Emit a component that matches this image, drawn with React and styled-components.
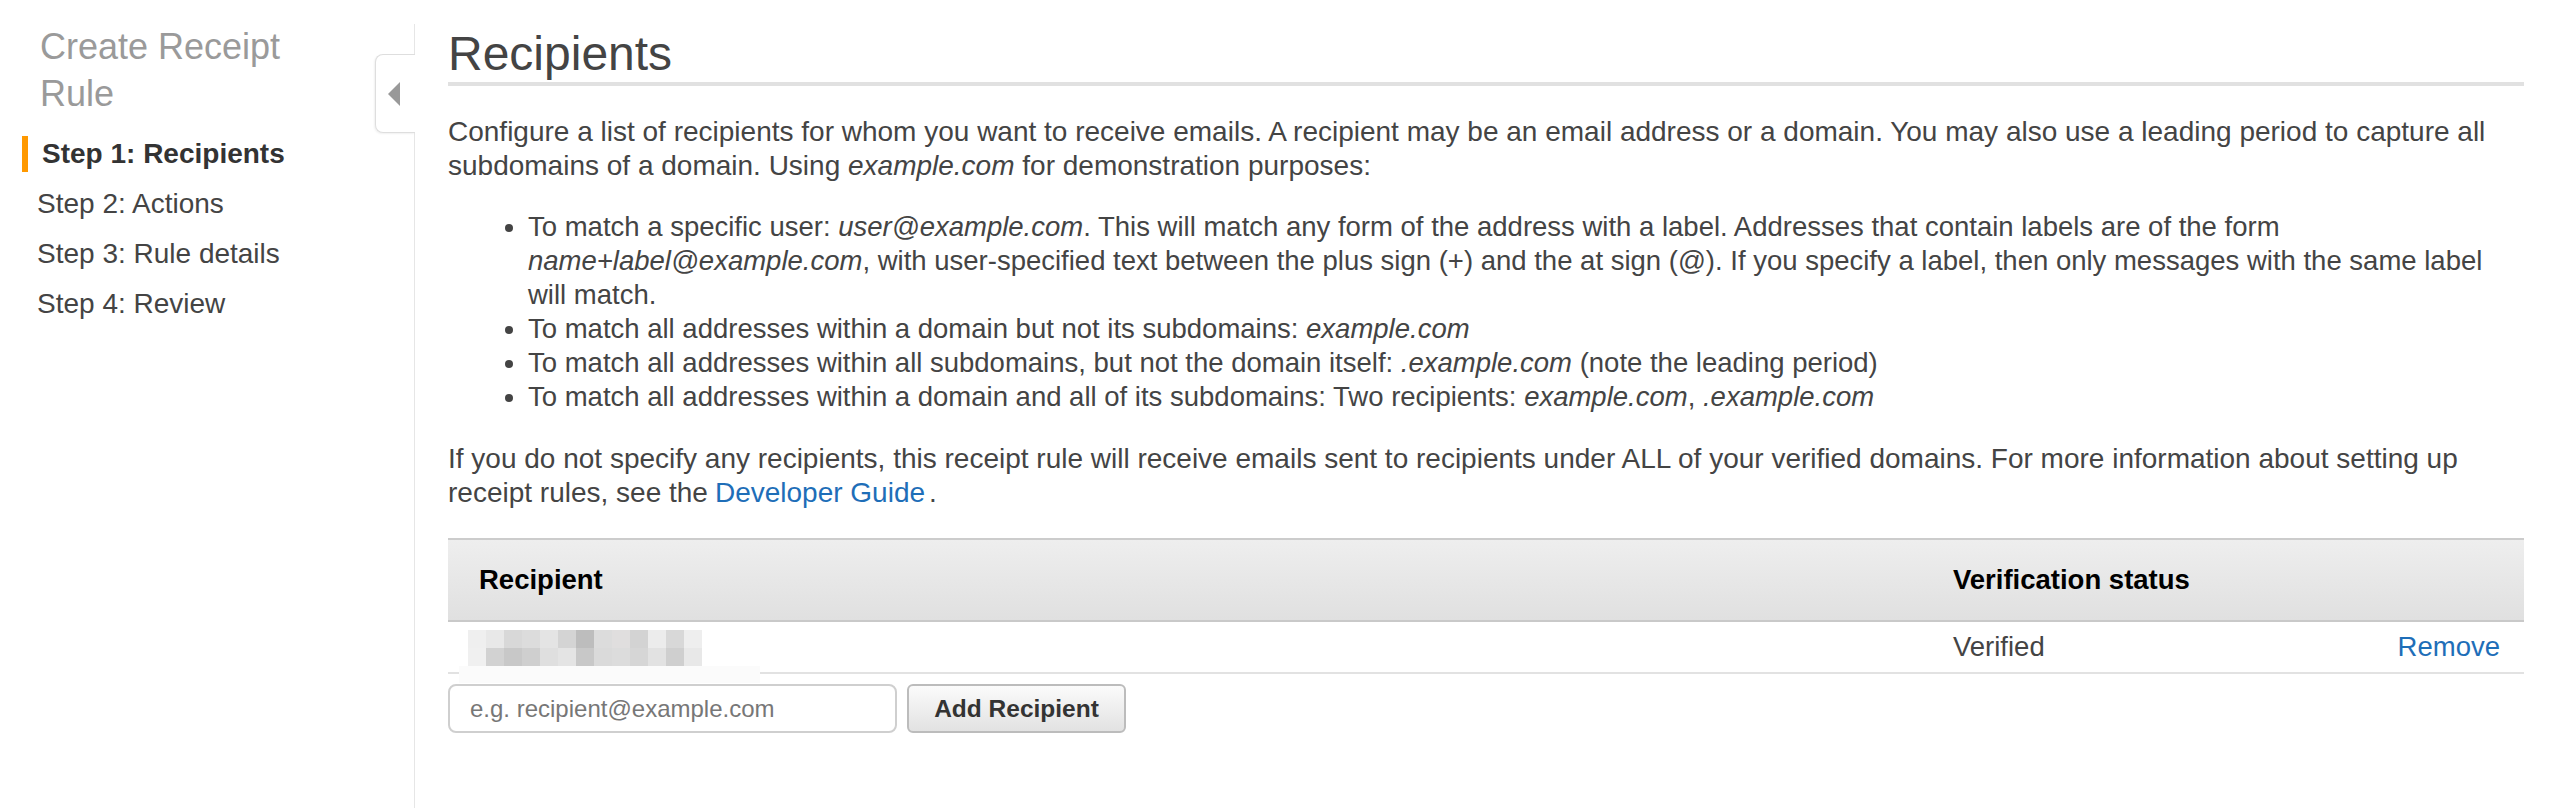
import React from "react";
import styled, { createGlobalStyle } from "styled-components";

const GlobalStyle = createGlobalStyle`
  html, body {
    margin: 0;
    padding: 0;
    background: #fff;
  }
  body {
    font-family: "Liberation Sans", Arial, Helvetica, sans-serif;
    color: #444;
  }
`;

const Page = styled.div`
  display: flex;
  min-height: 808px;
  padding-top: 24px;
  box-sizing: border-box;
`;

const Sidebar = styled.aside`
  position: relative;
  flex-shrink: 0;
  width: 414px;
  border-right: 1px solid #e6e6e6;
`;

const SideTitle = styled.h2`
  margin: 0;
  padding-left: 40px;
  width: 300px;
  font-size: 36px;
  line-height: 46.8px;
  font-weight: normal;
  color: #9a9a9a;
`;

const Steps = styled.ul`
  list-style: none;
  margin: 18px 0 0;
  padding: 0;
`;

const Step = styled.li`
  font-size: 28px;
  line-height: 36px;
  margin-bottom: 14px;
  color: ${(p) => (p.$active ? "#333" : "#444")};
  font-weight: ${(p) => (p.$active ? "bold" : "normal")};
  padding-left: ${(p) => (p.$active ? "14px" : "37px")};
  margin-left: ${(p) => (p.$active ? "22px" : "0")};
  border-left: ${(p) => (p.$active ? "6px solid #f90" : "none")};
`;

/* collapse tab sits over the sidebar border */
const CollapseTab = styled.div`
  position: absolute;
  top: 30px;
  right: -1px;
  width: 40px;
  height: 79px;
  box-sizing: border-box;
  display: flex;
  align-items: center;
  justify-content: center;
  padding-right: 4px;
  background: #fff;
  border: 1px solid #dedede;
  border-right: none;
  border-radius: 8px 0 0 8px;
  box-shadow: -1px 1px 2px rgba(0, 0, 0, 0.06);
`;

const Main = styled.main`
  flex: 1;
  min-width: 0;
  padding: 0 28px 0 33px;
`;

const Heading = styled.h1`
  margin: 4px 0 0;
  padding-bottom: 2px;
  font-size: 48px;
  line-height: 52px;
  font-weight: normal;
  color: #444;
  border-bottom: 4px solid #e1e1e1;
`;

const Text = styled.p`
  margin: ${(p) => p.$top || "28px"} 0 0;
  font-size: 28px;
  line-height: 34px;
`;

const NoWrap = styled.span`
  white-space: nowrap;
`;

const Bullets = styled.ul`
  margin: 27px 0 0;
  padding-left: 80px;
  font-size: 27.5px;
  line-height: 34px;
`;

const Link = styled.a`
  color: #1e6eb8;
  text-decoration: none;
  padding: 0 4px 0 7px;
  cursor: pointer;
`;

const Table = styled.div`
  margin-top: 28px;
`;

const HeaderRow = styled.div`
  display: grid;
  grid-template-columns: 71% 1fr auto;
  align-items: center;
  height: 80px;
  background: linear-gradient(#eeeeee, #e0e0e0);
  border-top: 2px solid #cccccc;
  border-bottom: 2px solid #c9c9c9;
`;

const HeadCell = styled.div`
  padding-left: 31px;
  font-size: 27.5px;
  font-weight: bold;
  color: #000;
`;

const BodyRow = styled.div`
  display: grid;
  grid-template-columns: 71% 1fr auto;
  align-items: center;
  height: 50px;
  border-bottom: 2px solid #e2e2e2;
  font-size: 27.5px;
`;

const Cell = styled.div`
  padding-left: ${(p) => p.$pl || "31px"};
  padding-right: ${(p) => p.$pr || "0"};
`;

const Mosaic = styled.div`
  position: relative;
  display: grid;
  grid-template-columns: repeat(13, 18px);
  grid-auto-rows: 18px;
  width: max-content;
  margin-top: 2px;
`;

const Pixel = styled.div`
  background: ${(p) => p.$shade};
`;

const PaleStrip = styled.div`
  position: absolute;
  left: -9px;
  top: 36px;
  width: 301px;
  height: 17px;
  background: #fbfbfb;
`;

const RowLink = styled.a`
  color: #1e6eb8;
  text-decoration: none;
  cursor: pointer;
`;

const AddForm = styled.div`
  display: flex;
  gap: 10px;
  margin-top: 10px;
`;

const Input = styled.input`
  width: 449px;
  height: 49px;
  box-sizing: border-box;
  padding: 0 20px;
  border: 2px solid #cfcfcf;
  border-radius: 8px;
  font-family: inherit;
  font-size: 24px;
  color: #333;
  outline: none;
  &::placeholder {
    color: #777;
  }
`;

const Button = styled.button`
  width: 219px;
  height: 49px;
  box-sizing: border-box;
  border: 2px solid #bcbcbc;
  border-radius: 6px;
  background: linear-gradient(#fbfbfb, #e2e2e2);
  font-family: inherit;
  font-size: 24.5px;
  font-weight: bold;
  color: #333;
  cursor: pointer;
`;

const shades = [
  "#efefef", "#e8e8e8", "#d8d8d8", "#dcdcdc", "#e4e4e4", "#d4d4d4", "#bdbdbd",
  "#dcdcdc", "#e0dede", "#d3d3d3", "#ececec", "#d8d8d8", "#eeeeee",
  "#f0f0f0", "#d2d2d2", "#c8c8c8", "#cfcfcf", "#dfdfdf", "#e4e4e4", "#c8c8c8",
  "#dadada", "#dcdcdc", "#d6d6d6", "#e2e2e2", "#cfcfcf", "#e8e8e8",
];

const steps = ["Step 1: Recipients", "Step 2: Actions", "Step 3: Rule details", "Step 4: Review"];

export default function App() {
  return (
    <>
      <GlobalStyle />
      <Page>
        <Sidebar>
          <SideTitle>Create Receipt Rule</SideTitle>
          <Steps>
            {steps.map((s, i) => (
              <Step key={s} $active={i === 0}>
                {s}
              </Step>
            ))}
          </Steps>
          <CollapseTab>
            <svg width="12" height="24" viewBox="0 0 12 24">
              <path d="M12 0 L0 12 L12 24 Z" fill="#999" />
            </svg>
          </CollapseTab>
        </Sidebar>

        <Main>
          <Heading>Recipients</Heading>
          <Text $top="29px">
            Configure a list of recipients for whom you want to receive emails. A recipient may be an
            email address or a domain. You may also use a leading period to capture all subdomains of a
            domain. Using <em>example.com</em> for demonstration purposes:
          </Text>
          <Bullets>
            <li>
              To match a specific user: <em>user@example.com</em>. This will match any form of the address
              with a label. Addresses that contain labels are of the form <em>name+label@example.com</em>,
              with user-specified text between the plus sign (+) and the at sign (@). If you specify a
              label, then only messages with the same label will match.
            </li>
            <li>
              To match all addresses within a domain but not its subdomains: <em>example.com</em>
            </li>
            <li>
              To match all addresses within all subdomains, but not the domain itself:{" "}
              <em>.example.com</em> (note the leading period)
            </li>
            <li>
              To match all addresses within a domain and all of its subdomains: Two recipients:{" "}
              <em>example.com</em>, <em>.example.com</em>
            </li>
          </Bullets>
          <Text>
            If you do not specify any recipients, this receipt rule will receive emails sent to recipients
            under ALL of your verified domains. For more information about setting up{" "}
            <NoWrap>receipt rules,</NoWrap> see the<Link>Developer Guide</Link>.
          </Text>

          <Table>
            <HeaderRow>
              <HeadCell>Recipient</HeadCell>
              <HeadCell>Verification status</HeadCell>
              <div />
            </HeaderRow>
            <BodyRow>
              <Cell $pl="20px">
                <Mosaic>
                  {shades.map((c, i) => (
                    <Pixel key={i} $shade={c} />
                  ))}
                  <PaleStrip />
                </Mosaic>
              </Cell>
              <Cell>Verified</Cell>
              <Cell $pl="0" $pr="24px">
                <RowLink>Remove</RowLink>
              </Cell>
            </BodyRow>
          </Table>

          <AddForm>
            <Input placeholder="e.g. recipient@example.com" />
            <Button>Add Recipient</Button>
          </AddForm>
        </Main>
      </Page>
    </>
  );
}
